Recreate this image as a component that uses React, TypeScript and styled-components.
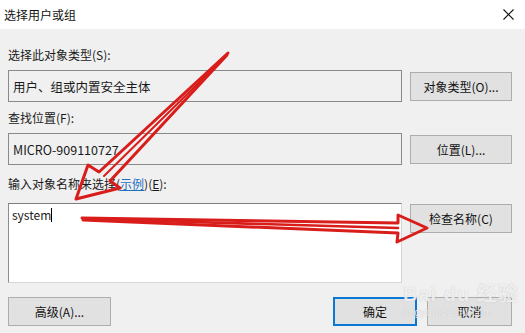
import styled, { createGlobalStyle } from 'styled-components'
import type { FunctionComponent, ReactNode } from 'react'

const GlobalStyle = createGlobalStyle`
  html, body {
    margin: 0;
    padding: 0;
    background: #f0f0f0;
  }
  body {
    font-family: "Noto Sans CJK SC", "Noto Sans", sans-serif;
    color: #1a1a1a;
  }
`

const Window = styled.div`
  position: relative;
  width: 525px;
  height: 333px;
  overflow: hidden;
  background: #f0f0f0;
  display: flex;
  flex-direction: column;
`

const TitleBar = styled.div`
  height: 29px;
  flex: none;
  background: #ffffff;
  display: flex;
  align-items: center;
  justify-content: space-between;
  padding: 0 10px 0 4px;
  font-size: 12px;
  color: #111;
`

const CloseIcon = styled.svg`
  width: 11px;
  height: 11px;
  margin-right: 1px;
`

const Body = styled.div`
  display: grid;
  grid-template-columns: 394px 102px;
  column-gap: 8px;
  padding: 18px 13px 0 8px;
  align-items: center;
`

const Label = styled.div<{ $offset?: number }>`
  grid-column: 1 / 3;
  height: 16px;
  line-height: 16px;
  font-size: 12px;
  color: #1a1a1a;
  margin-top: ${(p) => p.$offset ?? 0}px;
`

const Field = styled.div`
  grid-column: 1;
  height: 32px;
  box-sizing: border-box;
  border: 1px solid #8a8a8a;
  background: #f0f0f0;
  display: flex;
  align-items: center;
  padding-left: 4px;
  font-size: 12.5px;
  margin: 7px 0 8px;
`

const NameArea = styled.div`
  grid-column: 1;
  align-self: start;
  height: 80px;
  box-sizing: border-box;
  margin-top: 11px;
  background: #ffffff;
  border: 1px solid #d6d6d6;
  border-top-color: #7e7e7e;
  border-left-color: #8c8c8c;
  padding: 3px 0 0 3px;
  font-size: 12px;
  line-height: 16px;
`

const Caret = styled.span`
  display: inline-block;
  width: 1px;
  height: 14px;
  background: #000;
  vertical-align: -2px;
`

const Button = styled.button<{ $default?: boolean; $width?: number }>`
  font-family: inherit;
  font-size: 12px;
  color: #111;
  height: 29px;
  width: ${(p) => (p.$width ? `${p.$width}px` : '102px')};
  box-sizing: border-box;
  background: #e1e1e1;
  border: ${(p) => (p.$default ? '2px solid #0a78d4' : '1px solid #adadad')};
  padding: 0;
  cursor: default;
`

const SideButton = styled(Button)<{ $top?: boolean }>`
  grid-column: 2;
  align-self: ${(p) => (p.$top ? 'start' : 'center')};
  margin-top: ${(p) => (p.$top ? '12px' : '0')};
`

const Link = styled.span`
  color: #1f6fc0;
  text-decoration: underline;
`

const Mnemonic = styled.span`
  text-decoration: underline;
`

const Footer = styled.div`
  display: flex;
  align-items: center;
  gap: 10px;
  padding: 14px 13px 0 8px;
`

const Spacer = styled.div`
  flex: 1;
`

const Overlay = styled.svg`
  position: absolute;
  left: 0;
  top: 0;
  width: 525px;
  height: 333px;
  pointer-events: none;
`

const Watermark = styled.div`
  position: absolute;
  left: 403px;
  top: 284px;
  color: rgba(255, 255, 255, 0.75);
  text-shadow: 0 0 1px rgba(150, 150, 150, 0.6);
  font-family: "Liberation Sans", "Noto Sans CJK SC", sans-serif;
  pointer-events: none;
  line-height: 1;
`

const WatermarkTitle = styled.div`
  font-size: 20px;
  font-weight: bold;
  letter-spacing: 1px;
`

const WatermarkSub = styled.div`
  font-size: 10px;
  margin-top: 4px;
  letter-spacing: 0.5px;
`

const Row: FunctionComponent<{ field: ReactNode; button: string }> = ({ field, button }) => (
  <>
    <Field>{field}</Field>
    <SideButton>{button}</SideButton>
  </>
)

const App: FunctionComponent = () => (
  <Window>
    <GlobalStyle />
    <TitleBar>
      <span>选择用户或组</span>
      <CloseIcon viewBox="0 0 11 11">
        <path d="M0.5 0.5 L10.5 10.5 M10.5 0.5 L0.5 10.5" stroke="#111" strokeWidth="1.1" />
      </CloseIcon>
    </TitleBar>

    <Body>
      <Label>选择此对象类型(S):</Label>
      <Row field="用户、组或内置安全主体" button="对象类型(O)..." />

      <Label>查找位置(F):</Label>
      <Row field="MICRO-909110727" button="位置(L)..." />

      <Label $offset={3}>
        输入对象名称来选择(<Link>示例</Link>)(<Mnemonic>E</Mnemonic>):
      </Label>
      <NameArea>
        system
        <Caret />
      </NameArea>
      <SideButton $top>检查名称(C)</SideButton>
    </Body>

    <Footer>
      <Button $width={103}>高级(A)...</Button>
      <Spacer />
      <Button $default $width={84}>
        确定
      </Button>
      <Button $width={85}>取消</Button>
    </Footer>

    <Watermark>
      <WatermarkTitle>Bai du 经验</WatermarkTitle>
      <WatermarkSub>jingyan.baidu.com</WatermarkSub>
    </Watermark>

    <Overlay viewBox="0 0 525 333">
      <g fill="none" stroke="#d81d1b" strokeWidth="3" strokeLinejoin="round" strokeLinecap="round">
        <path d="M228 53 L99 172 L88 165 L76 199 L120 188 L110 181 L227 55" />
        <path d="M224 58 L104 176" strokeWidth="2" />
        <path d="M82 218 L398 223 L398 215 L427 228 L397 242 L398 233 L83 220" />
        <path d="M90 219 L398 228" strokeWidth="2.6" />
      </g>
    </Overlay>
  </Window>
)

export default App
